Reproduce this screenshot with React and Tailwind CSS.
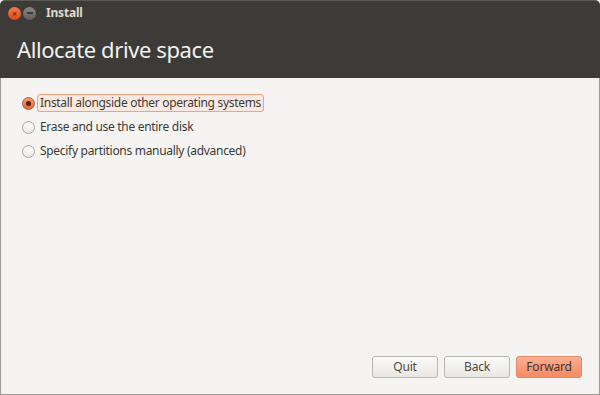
import React from "react";

function Radio({ checked }) {
  return (
    <span
      className={
        "flex h-[13px] w-[13px] items-center justify-center rounded-full border " +
        (checked
          ? "border-[#c9562b] bg-gradient-to-b from-[#f39b72] to-[#e5643a]"
          : "border-[#a9a8a3] bg-gradient-to-b from-[#ffffff] to-[#ebeae6]")
      }
    >
      {checked && <span className="h-[5px] w-[5px] rounded-full bg-[#5a1f0c]" />}
    </span>
  );
}

function Option({ checked, label }) {
  return (
    <div className="flex h-[24px] items-center">
      <div className="flex w-[15px] justify-start">
        <Radio checked={checked} />
      </div>
      <span
        className={
          "px-[2px] leading-[16px] " +
          (checked ? "rounded-[3px] border border-[#f0a283] bg-[#fbe9e1]" : "border border-transparent")
        }
      >
        {label}
      </span>
    </div>
  );
}

function Btn({ children, primary }) {
  return (
    <button
      className={
        "flex h-[22px] w-[66px] items-center justify-center rounded-[3px] border text-[12px] tracking-[-0.2px] " +
        (primary
          ? "border-[#e08a68] bg-gradient-to-b from-[#fbae90] to-[#f48a64] text-[#3f3430]"
          : "border-[#b9b8b3] bg-gradient-to-b from-[#fbfbfa] to-[#e8e7e3] text-[#4c4b47]")
      }
    >
      {children}
    </button>
  );
}

export default function App() {
  return (
    <div
      className="flex h-[395px] w-[600px] flex-col overflow-hidden bg-[#f5f4f3]"
      style={{ fontFamily: '"Noto Sans", "DejaVu Sans", sans-serif' }}
    >
      <div className="flex h-[78px] flex-col rounded-t-[5px] border-t border-[#5a5953] bg-[#3c3b37]">
        <div className="flex h-[24px] items-center pl-[8px]">
          <div className="flex gap-[2px]">
            <span className="flex h-[13px] w-[13px] items-center justify-center rounded-full bg-gradient-to-b from-[#f8774a] to-[#df4a16] text-[9px] font-bold leading-none text-[#7a2a10]">
              ×
            </span>
            <span className="flex h-[13px] w-[13px] items-center justify-center rounded-full bg-gradient-to-b from-[#8a8984] to-[#5e5d58]">
              <span className="h-[1.5px] w-[6px] bg-[#3c3b37]" />
            </span>
          </div>
          <span className="ml-[10px] text-[12px] font-bold tracking-[-0.2px] text-[#dfdbd2]">Install</span>
        </div>
        <div className="pl-[17px] pt-[10px] text-[22px] leading-[28px] tracking-[-0.4px] text-[#f2f1f0]">
          Allocate drive space
        </div>
      </div>
      <div className="flex flex-1 flex-col border-x border-b border-[#9c9b97]">
        <div className="flex flex-col pl-[21px] pt-[13px] text-[12px] tracking-[-0.3px] text-[#3c3b37]">
          <Option checked label="Install alongside other operating systems" />
          <Option label="Erase and use the entire disk" />
          <Option label="Specify partitions manually (advanced)" />
        </div>
        <div className="mt-auto flex justify-end gap-[6px] pb-[16px] pr-[17px]">
          <Btn>Quit</Btn>
          <Btn>Back</Btn>
          <Btn primary>Forward</Btn>
        </div>
      </div>
    </div>
  );
}
